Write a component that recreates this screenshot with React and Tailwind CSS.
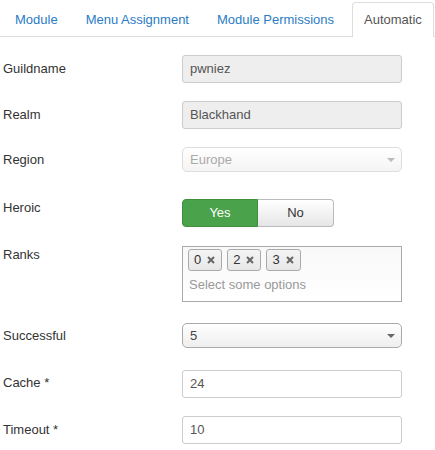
export default function App() {
  const font = { fontFamily: '"Liberation Sans", Arial, sans-serif' };

  const Row = ({ label, top, mt, children }) => (
    <div className={`flex ${mt}`}>
      <div className={`w-[179px] shrink-0 leading-[18px] text-[13px] text-[#333] ${top}`}>{label}</div>
      <div className="w-[220px]">{children}</div>
    </div>
  );

  const Chip = ({ v }) => (
    <div className="flex h-[22px] items-center gap-[6px] rounded-[3px] border border-[#aaa] bg-gradient-to-b from-[#f4f4f4] to-[#e8e8e8] pl-[5px] pr-[6px] text-[13px] text-[#333]">
      <span>{v}</span>
      <svg width="8" height="8" viewBox="0 0 8 8">
        <path d="M1 1L7 7M7 1L1 7" stroke="#666" strokeWidth="2" />
      </svg>
    </div>
  );

  return (
    <div className="min-h-screen w-[435px] bg-white" style={font}>
      <div className="flex h-[37px] border-b border-[#ddd] pl-[3px] pt-[2px] text-[13px]">
        {["Module", "Menu Assignment", "Module Permissions"].map((t) => (
          <div key={t} className="mr-[4px] px-[12px] leading-[35px] text-[#2a7cc4]">{t}</div>
        ))}
        <div className="-mb-px ml-[2px] rounded-t-[4px] border border-b-0 border-[#ddd] bg-white px-[11px] leading-[34px] text-[#555]">
          Automatic
        </div>
      </div>

      <div className="pl-[3px]">
        <Row label="Guildname" top="pt-[5px]" mt="mt-[18px]">
          <div className="flex h-[28px] items-center rounded-[3px] border border-[#ccc] bg-[#eee] px-[7px] text-[13px] text-[#555]">pwniez</div>
        </Row>
        <Row label="Realm" top="pt-[5px]" mt="mt-[18px]">
          <div className="flex h-[28px] items-center rounded-[3px] border border-[#ccc] bg-[#eee] px-[7px] text-[13px] text-[#555]">Blackhand</div>
        </Row>
        <Row label="Region" top="pt-[4px]" mt="mt-[18px]">
          <div className="flex h-[25px] items-center justify-between rounded-[5px] border border-[#ddd] bg-gradient-to-b from-white to-[#f4f4f4] pl-[7px] pr-[6px] text-[13px] text-[#aaa]">
            <span>Europe</span>
            <span className="h-0 w-0 border-x-[4px] border-t-[4px] border-x-transparent border-t-[#bbb]" />
          </div>
        </Row>
        <Row label="Heroic" top="pt-0" mt="mt-[27px]">
          <div className="flex h-[28px] w-[152px] text-[13px]">
            <div className="flex w-[76px] items-center justify-center rounded-l-[4px] border border-[#3f8f3f] bg-[#4aa24a] text-white">Yes</div>
            <div className="flex w-[76px] items-center justify-center rounded-r-[4px] border border-l-0 border-[#bbb] bg-gradient-to-b from-white to-[#e6e6e6] text-[#333]">No</div>
          </div>
        </Row>
        <Row label="Ranks" top="pt-0" mt="mt-[19px]">
          <div className="h-[56px] border border-[#aaa] bg-gradient-to-b from-[#f8f8f8] to-white pl-[5px] pt-[2px]">
            <div className="flex gap-[5px]">
              <Chip v="0" />
              <Chip v="2" />
              <Chip v="3" />
            </div>
            <div className="mt-[5px] pl-[1px] text-[13px] leading-[18px] text-[#999]">Select some options</div>
          </div>
        </Row>
        <Row label="Successful" top="pt-[4px]" mt="mt-[21px]">
          <div className="flex h-[25px] items-center justify-between rounded-[5px] border border-[#aaa] bg-gradient-to-b from-white to-[#eee] pl-[7px] pr-[6px] text-[13px] text-[#444]">
            <span>5</span>
            <span className="h-0 w-0 border-x-[4px] border-t-[4px] border-x-transparent border-t-[#666]" />
          </div>
        </Row>
        <Row label="Cache *" top="pt-[4px]" mt="mt-[22px]">
          <div className="flex h-[28px] items-center rounded-[3px] border border-[#ccc] bg-white px-[7px] text-[13px] text-[#555]">24</div>
        </Row>
        <Row label="Timeout *" top="pt-[5px]" mt="mt-[18px]">
          <div className="flex h-[28px] items-center rounded-[3px] border border-[#ccc] bg-white px-[7px] text-[13px] text-[#555]">10</div>
        </Row>
      </div>
    </div>
  );
}
